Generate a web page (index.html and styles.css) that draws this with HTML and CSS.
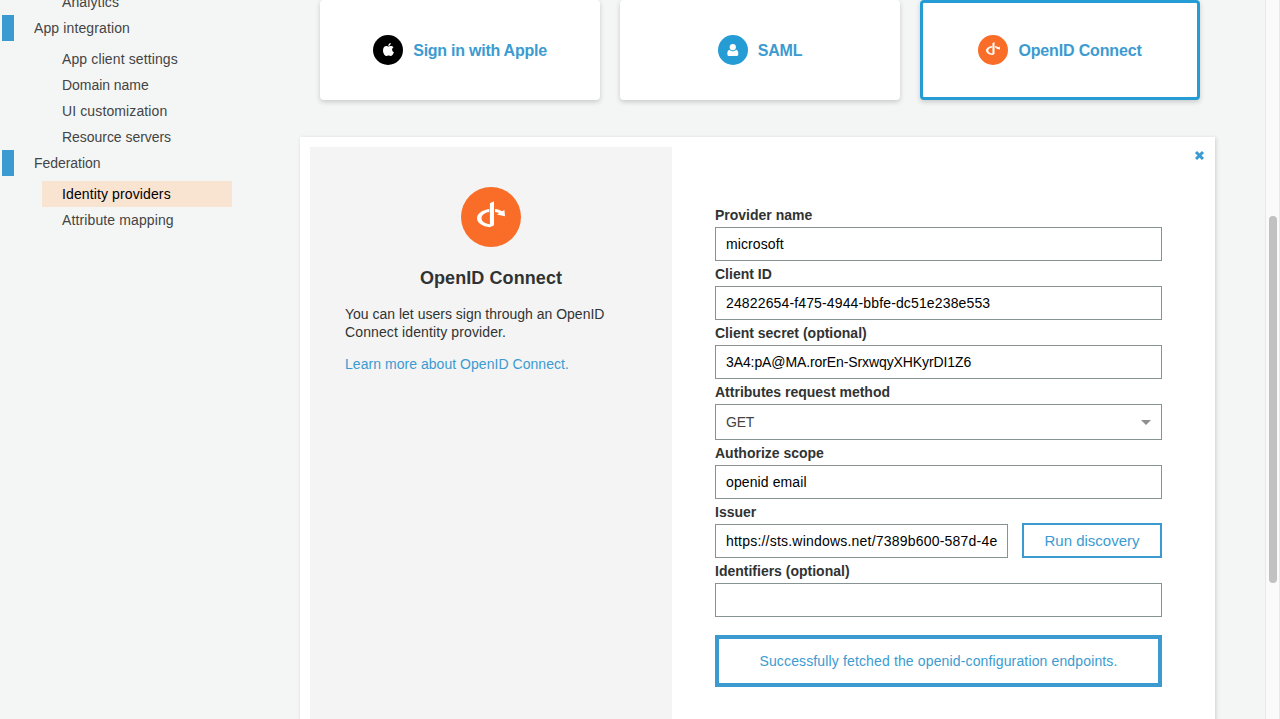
FILE: index.html
```html
<!DOCTYPE html>
<html lang="en">
<head>
<meta charset="utf-8">
<title>Identity providers</title>
<link rel="stylesheet" href="styles.css">
</head>
<body>
<svg class="defs" width="0" height="0" aria-hidden="true">
  <symbol id="openid" viewBox="0 0 60 60">
    <circle cx="30" cy="30" r="30" fill="#f96d28"/>
    <path fill="#fff" d="M28.9 16.3 33 14.200V38.200L28.900 40.200C21.600 39.500 16 35.800 16 31.200 16 26.600 21.300 22.900 28.300 22V25.100C23.700 25.900 20.500 28.200 20.500 31.200 20.500 34.300 24 36.700 28.900 37.200ZM34 22C36.700 22.300 39.100 23.100 41.100 24.300L43.400 23 44 29.200 36 27.400 38.200 26.100C37.100 25.500 35.600 25.100 34 24.900Z"/>
  </symbol>
</svg>
<div class="app">
  <nav class="sidebar">
    <a class="item">Analytics</a>
    <a class="section">App integration</a>
    <div class="group">
      <a class="item">App client settings</a>
      <a class="item tight">Domain name</a>
      <a class="item">UI customization</a>
      <a class="item tight">Resource servers</a>
    </div>
    <a class="section tight">Federation</a>
    <div class="group">
      <a class="item active">Identity providers</a>
      <a class="item">Attribute mapping</a>
    </div>
  </nav>
  <main class="content">
    <div class="cards">
      <a class="card apple">
        <svg class="logo" viewBox="0 0 30 30"><circle cx="15" cy="15" r="15"/><path fill="#fff" d="M17.800 8.100C17.800 9.700 16.800 10.900 15.300 11 15.200 9.500 16.300 8.400 17.800 8.100ZM15.500 11.600C16 11.600 16.700 11 17.800 11 18.900 11 19.900 11.500 20.500 12.300 18.500 13.500 18.700 16.300 20.900 17.200 20.400 18.900 19.200 20.900 18 20.900 17.100 20.900 16.700 20.400 15.700 20.400 14.600 20.400 14.200 20.900 13.300 20.900 11.700 20.900 10 17.900 10 15.400 10 12.500 11.700 11 13.300 11 14.300 11 15 11.600 15.500 11.600Z"/></svg>
        <span>Sign in with Apple</span>
      </a>
      <a class="card saml">
        <svg class="logo" viewBox="0 0 30 30"><circle cx="15" cy="15" r="15" fill="#259dd4"/><path fill="#fff" d="M11.500 14.700C12.500 15.700 13.600 16.200 14.800 16.200S17.200 15.700 18.200 14.700C19.800 14.900 20.300 17 20.300 18.900 20.300 20.200 19.500 21 18.300 21H11.300C10.100 21 9.300 20.200 9.300 18.900 9.300 17 9.800 14.900 11.500 14.700Z"/><circle cx="14.800" cy="12.200" r="3.100" fill="#fff"/></svg>
        <span>SAML</span>
      </a>
      <a class="card selected">
        <svg class="logo"><use href="#openid"/></svg>
        <span>OpenID Connect</span>
      </a>
    </div>
    <section class="panel">
      <aside class="about">
        <svg class="about-logo"><use href="#openid"/></svg>
        <h2>OpenID Connect</h2>
        <p>You can let users sign through an OpenID<br><span class="loose">Connect identity provider.</span></p>
        <p><a class="link">Learn more about OpenID Connect.</a></p>
      </aside>
      <div class="form">
        <label>Provider name</label>
        <div class="input">microsoft</div>
        <label>Client ID</label>
        <div class="input client-id">24822654-f475-4944-bbfe-dc51e238e553</div>
        <label>Client secret (optional)</label>
        <div class="input secret">3A4:pA@MA.rorEn-SrxwqyXHKyrDI1Z6</div>
        <label>Attributes request method</label>
        <div class="select">GET<span class="caret"></span></div>
        <label>Authorize scope</label>
        <div class="input">openid email</div>
        <label>Issuer</label>
        <div class="row">
          <div class="input issuer">https://sts.windows.net/7389b600-587d-4e</div>
          <button class="run">Run discovery</button>
        </div>
        <label>Identifiers (optional)</label>
        <div class="input"></div>
        <div class="message">Successfully fetched the openid-configuration endpoints.</div>
      </div>
      <svg class="close" viewBox="0 0 11 11"><path d="M2 2 9 9M9 2 2 9"/></svg>
    </section>
  </main>
  <div class="scroll"><div class="thumb"></div></div>
</div>
</body>
</html>
```
FILE: styles.css
```css
* { box-sizing: border-box; }
body {
  margin: 0;
  overflow: hidden;
  background: #f4f6f6;
  color: #303333;
  font: 14px/18px "Liberation Sans", Arial, sans-serif;
}
.defs { display: block; }
.app { display: flex; height: 719px; overflow: hidden; }

.sidebar { width: 300px; flex: none; margin-top: -11px; color: #444; letter-spacing: .12px; }
.sidebar a { display: block; height: 26px; line-height: 26px; }
.section { margin-left: 2px; padding-left: 20px; border-left: 12px solid #3b9bd1; }
.item { margin-left: 42px; width: 190px; padding-left: 20px; }
.tight { letter-spacing: -.04px; }
.group { padding-top: 5px; }
.active { background: #f9e4d2; color: #000; }

.content { width: 965px; flex: none; }
.cards { display: flex; gap: 20px; padding-left: 20px; }
.card {
  display: flex; align-items: center; justify-content: center; gap: 10px;
  width: 280px; height: 100px;
  background: #fff; border-radius: 4px;
  box-shadow: 0 2px 5px rgba(0, 0, 0, .18);
  color: #3b9bd1; font-size: 16px; font-weight: bold; letter-spacing: -.12px;
}
.card span { padding-top: 2px; }
.apple { letter-spacing: -.25px; }
.saml { letter-spacing: -.2px; }
.selected { border: 3px solid #259dd4; letter-spacing: -.15px; }
.logo { width: 30px; height: 30px; }

.panel {
  position: relative;
  display: flex;
  width: 915px; height: 640px; margin-top: 37px; padding: 10px;
  background: #fff;
  box-shadow: 1px 1px 4px rgba(0, 0, 0, .16);
}
.about { width: 362px; padding: 40px 35px; background: #f4f4f4; text-align: center; }
.about-logo { display: block; width: 60px; height: 60px; margin: 0 auto; }
.about h2 { margin: 20px 0 16px; font-size: 18px; line-height: 22px; letter-spacing: .08px; }
.about p { margin: 0 0 14px; text-align: left; white-space: nowrap; }
.about .loose { letter-spacing: .12px; }
.link { color: #3b9bd1; letter-spacing: .04px; }
.close { position: absolute; top: 13px; right: 10px; width: 11px; height: 11px; fill: none; stroke: #3b9bd1; stroke-width: 3; }

.form { width: 447px; margin: 55px 0 0 43px; }
.form label { display: block; height: 25px; padding-top: 4px; font-weight: bold; }
.input, .select {
  height: 34px; padding: 0 10px; line-height: 32px;
  background: #fff; border: 1px solid #879292; color: #000;
  white-space: nowrap; overflow: hidden; letter-spacing: .1px;
}
.client-id { letter-spacing: .14px; }
.secret { letter-spacing: -.1px; }
.select { display: flex; align-items: center; justify-content: space-between; height: 36px; line-height: 34px; color: #444; letter-spacing: -.2px; }
.caret { border: 5px solid transparent; border-top-color: #8e8e8e; border-bottom: 0; }
.row { display: flex; justify-content: space-between; }
.issuer { width: 293px; letter-spacing: .21px; }
.run {
  width: 140px; height: 35px; margin-top: -1px; padding: 0;
  background: #fff; border: 2px solid #3b9bd1;
  color: #3b9bd1; font: 15px "Liberation Sans", Arial, sans-serif;
}
.message {
  height: 52px; margin-top: 18px; line-height: 44px; letter-spacing: .14px;
  border: 4px solid #3b9bd1; color: #3b9bd1; text-align: center;
}

.scroll { width: 15px; padding: 216px 0 0 3px; background: #fafafa; border: 1px solid #e8e8e8; border-width: 0 1px; }
.thumb { width: 8px; height: 367px; border-radius: 4px; background: #c1c1c1; }
```
